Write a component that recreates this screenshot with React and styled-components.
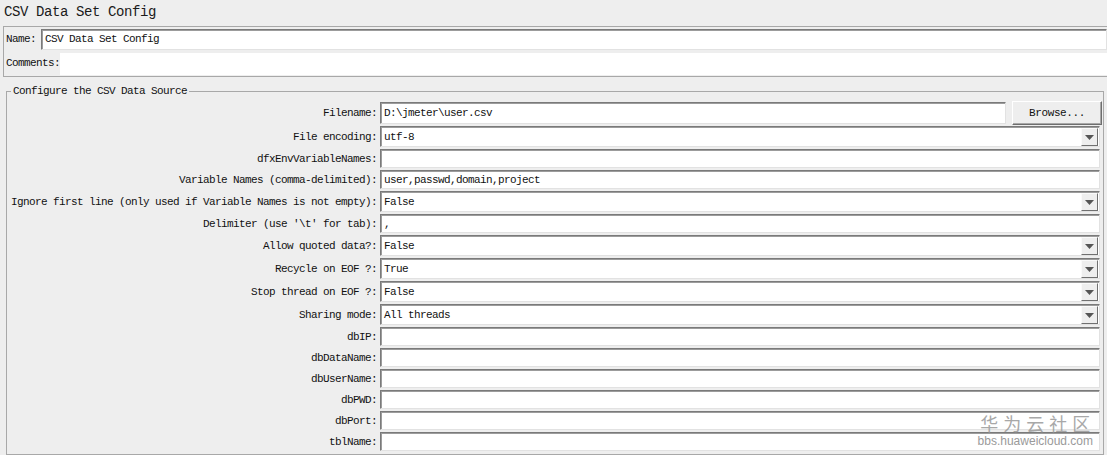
import React from 'react'
import styled, { createGlobalStyle } from 'styled-components'

const Global = createGlobalStyle`
  html, body {
    margin: 0;
    padding: 0;
    background: #eeeeee;
    overflow: hidden;
  }
  * { box-sizing: border-box; }
`

const MONO = `"Liberation Mono", "Noto Sans CJK SC", monospace`

const fields = [
  { label: 'Filename:', kind: 'file', value: 'D:\\jmeter\\user.csv' },
  { label: 'File encoding:', kind: 'combo', value: 'utf-8' },
  { label: 'dfxEnvVariableNames:', kind: 'text', value: '' },
  { label: 'Variable Names (comma-delimited):', kind: 'text', value: 'user,passwd,domain,project' },
  { label: 'Ignore first line (only used if Variable Names is not empty):', kind: 'combo', value: 'False' },
  { label: "Delimiter (use '\\t' for tab):", kind: 'text', value: ',' },
  { label: 'Allow quoted data?:', kind: 'combo', value: 'False' },
  { label: 'Recycle on EOF ?:', kind: 'combo', value: 'True' },
  { label: 'Stop thread on EOF ?:', kind: 'combo', value: 'False' },
  { label: 'Sharing mode:', kind: 'combo', value: 'All threads' },
  { label: 'dbIP:', kind: 'text', value: '' },
  { label: 'dbDataName:', kind: 'text', value: '' },
  { label: 'dbUserName:', kind: 'text', value: '' },
  { label: 'dbPWD:', kind: 'text', value: '' },
  { label: 'dbPort:', kind: 'text', value: '' },
  { label: 'tblName:', kind: 'text', value: '' },
]

const rowHeight = { file: 24, combo: 23, text: 21 }

const App = () => {
  return (
    <Page>
      <Global />
      <Title>CSV Data Set Config</Title>

      <NamePanel>
        <NameRow>
          <SmallLabel $gap={5}>Name:</SmallLabel>
          <Field $h={21}>CSV Data Set Config</Field>
        </NameRow>
        <NameRow>
          <SmallLabel $gap={0}>Comments:</SmallLabel>
          <Comments />
        </NameRow>
      </NamePanel>

      <Group>
        <legend>Configure the CSV Data Source</legend>
        <Form>
          {fields.map((f) => (
            <React.Fragment key={f.label}>
              <Label $h={rowHeight[f.kind]}>{f.label}</Label>
              {f.kind === 'file' && (
                <FileRow>
                  <Field $h={22}>{f.value}</Field>
                  <Button>Browse...</Button>
                </FileRow>
              )}
              {f.kind === 'combo' && (
                <Combo>
                  <span>{f.value}</span>
                  <Arrow>
                    <svg width="9" height="5" viewBox="0 0 9 5">
                      <path d="M0 0 H9 L4.5 5 Z" fill="#555" />
                    </svg>
                  </Arrow>
                </Combo>
              )}
              {f.kind === 'text' && <Field $h={19} $m={1}>{f.value}</Field>}
            </React.Fragment>
          ))}
        </Form>
      </Group>

      <Mark>
        <div className='cn'>华为云社区</div>
        <div className='en'>bbs.huaweicloud.com</div>
      </Mark>
    </Page>
  )
}

export default App

const Page = styled.div`
  position: relative;
  width: 1107px;
  height: 455px;
  background: #eeeeee;
  font-family: ${MONO};
  color: #111;
`

const Title = styled.div`
  height: 24px;
  padding: 3px 0 0 4px;
  font-size: 14px;
  letter-spacing: -0.4px;
  line-height: 18px;
  color: #1a1a1a;
`

const NamePanel = styled.div`
  margin: 2px 0 0 3px;
  border: 1px solid #a8a8a8;
  border-right: none;
`

const NameRow = styled.div`
  display: flex;
  align-items: center;
  height: 24px;
  &:last-child {
    height: 25px;
    align-items: flex-end;
    padding-bottom: 1px;
  }
`

const SmallLabel = styled.div`
  font-size: 11px;
  letter-spacing: -0.6px;
  padding-left: 2px;
  padding-right: ${(p) => p.$gap}px;
  white-space: nowrap;
  align-self: center;
`

const Field = styled.div`
  flex: 1;
  height: ${(p) => p.$h}px;
  margin: ${(p) => p.$m || 0}px 0;
  background: #fff;
  border: 1px solid;
  border-color: #7a7a7a #e2e2e2 #e2e2e2 #7a7a7a;
  box-shadow: inset 1px 1px 0 #9c9c9c;
  padding: 0 3px;
  font-size: 11px;
  letter-spacing: -0.6px;
  display: flex;
  align-items: center;
  white-space: nowrap;
`

const Comments = styled.div`
  flex: 1;
  height: 22px;
  background: #fff;
`

const Group = styled.fieldset`
  margin: 8px 3px 0 6px;
  padding: 3px 3px 2px 1px;
  border: 1px solid #a8a8a8;
  legend {
    margin-left: 3px;
    padding: 0 2px;
    font-size: 11px;
    letter-spacing: -0.6px;
    line-height: 13px;
  }
`

const Form = styled.div`
  display: grid;
  grid-template-columns: 369px 1fr;
  column-gap: 3px;
`

const Label = styled.div`
  height: ${(p) => p.$h}px;
  display: flex;
  align-items: center;
  justify-content: flex-end;
  font-size: 11px;
  letter-spacing: -0.6px;
  white-space: nowrap;
`

const FileRow = styled.div`
  display: flex;
  align-items: center;
  gap: 6px;
  height: 24px;
`

const Button = styled.div`
  width: 90px;
  height: 24px;
  display: flex;
  align-items: center;
  justify-content: center;
  background: #eeeeee;
  border: 1px solid;
  border-color: #fff #6e6e6e #6e6e6e #fff;
  box-shadow: inset -1px -1px 0 #a8a8a8;
  font-size: 11px;
  letter-spacing: -0.4px;
  margin-right: -2px;
`

const Combo = styled.div`
  height: 21px;
  margin: 1px 0;
  display: flex;
  align-items: center;
  justify-content: space-between;
  background: #fff;
  border: 1px solid;
  border-color: #7a7a7a #e2e2e2 #e2e2e2 #7a7a7a;
  box-shadow: inset 1px 1px 0 #9c9c9c;
  padding-left: 3px;
  font-size: 11px;
  letter-spacing: -0.6px;
`

const Arrow = styled.div`
  width: 17px;
  height: 18px;
  margin: 1px 1px 0 0;
  display: flex;
  align-items: center;
  justify-content: center;
  background: #eeeeee;
  border: 1px solid;
  border-color: #fafafa #707070 #707070 #fafafa;
`

const Mark = styled.div`
  position: absolute;
  right: 14px;
  bottom: 8px;
  display: flex;
  flex-direction: column;
  align-items: center;
  gap: 2px;
  color: #9a9a9a;
  pointer-events: none;
  .cn {
    font-family: "Noto Sans CJK SC", sans-serif;
    font-size: 18px;
    letter-spacing: 5px;
    line-height: 19px;
    margin-right: -5px;
    opacity: 0.85;
  }
  .en {
    font-family: "Liberation Sans", sans-serif;
    font-size: 12px;
    line-height: 12px;
  }
`
